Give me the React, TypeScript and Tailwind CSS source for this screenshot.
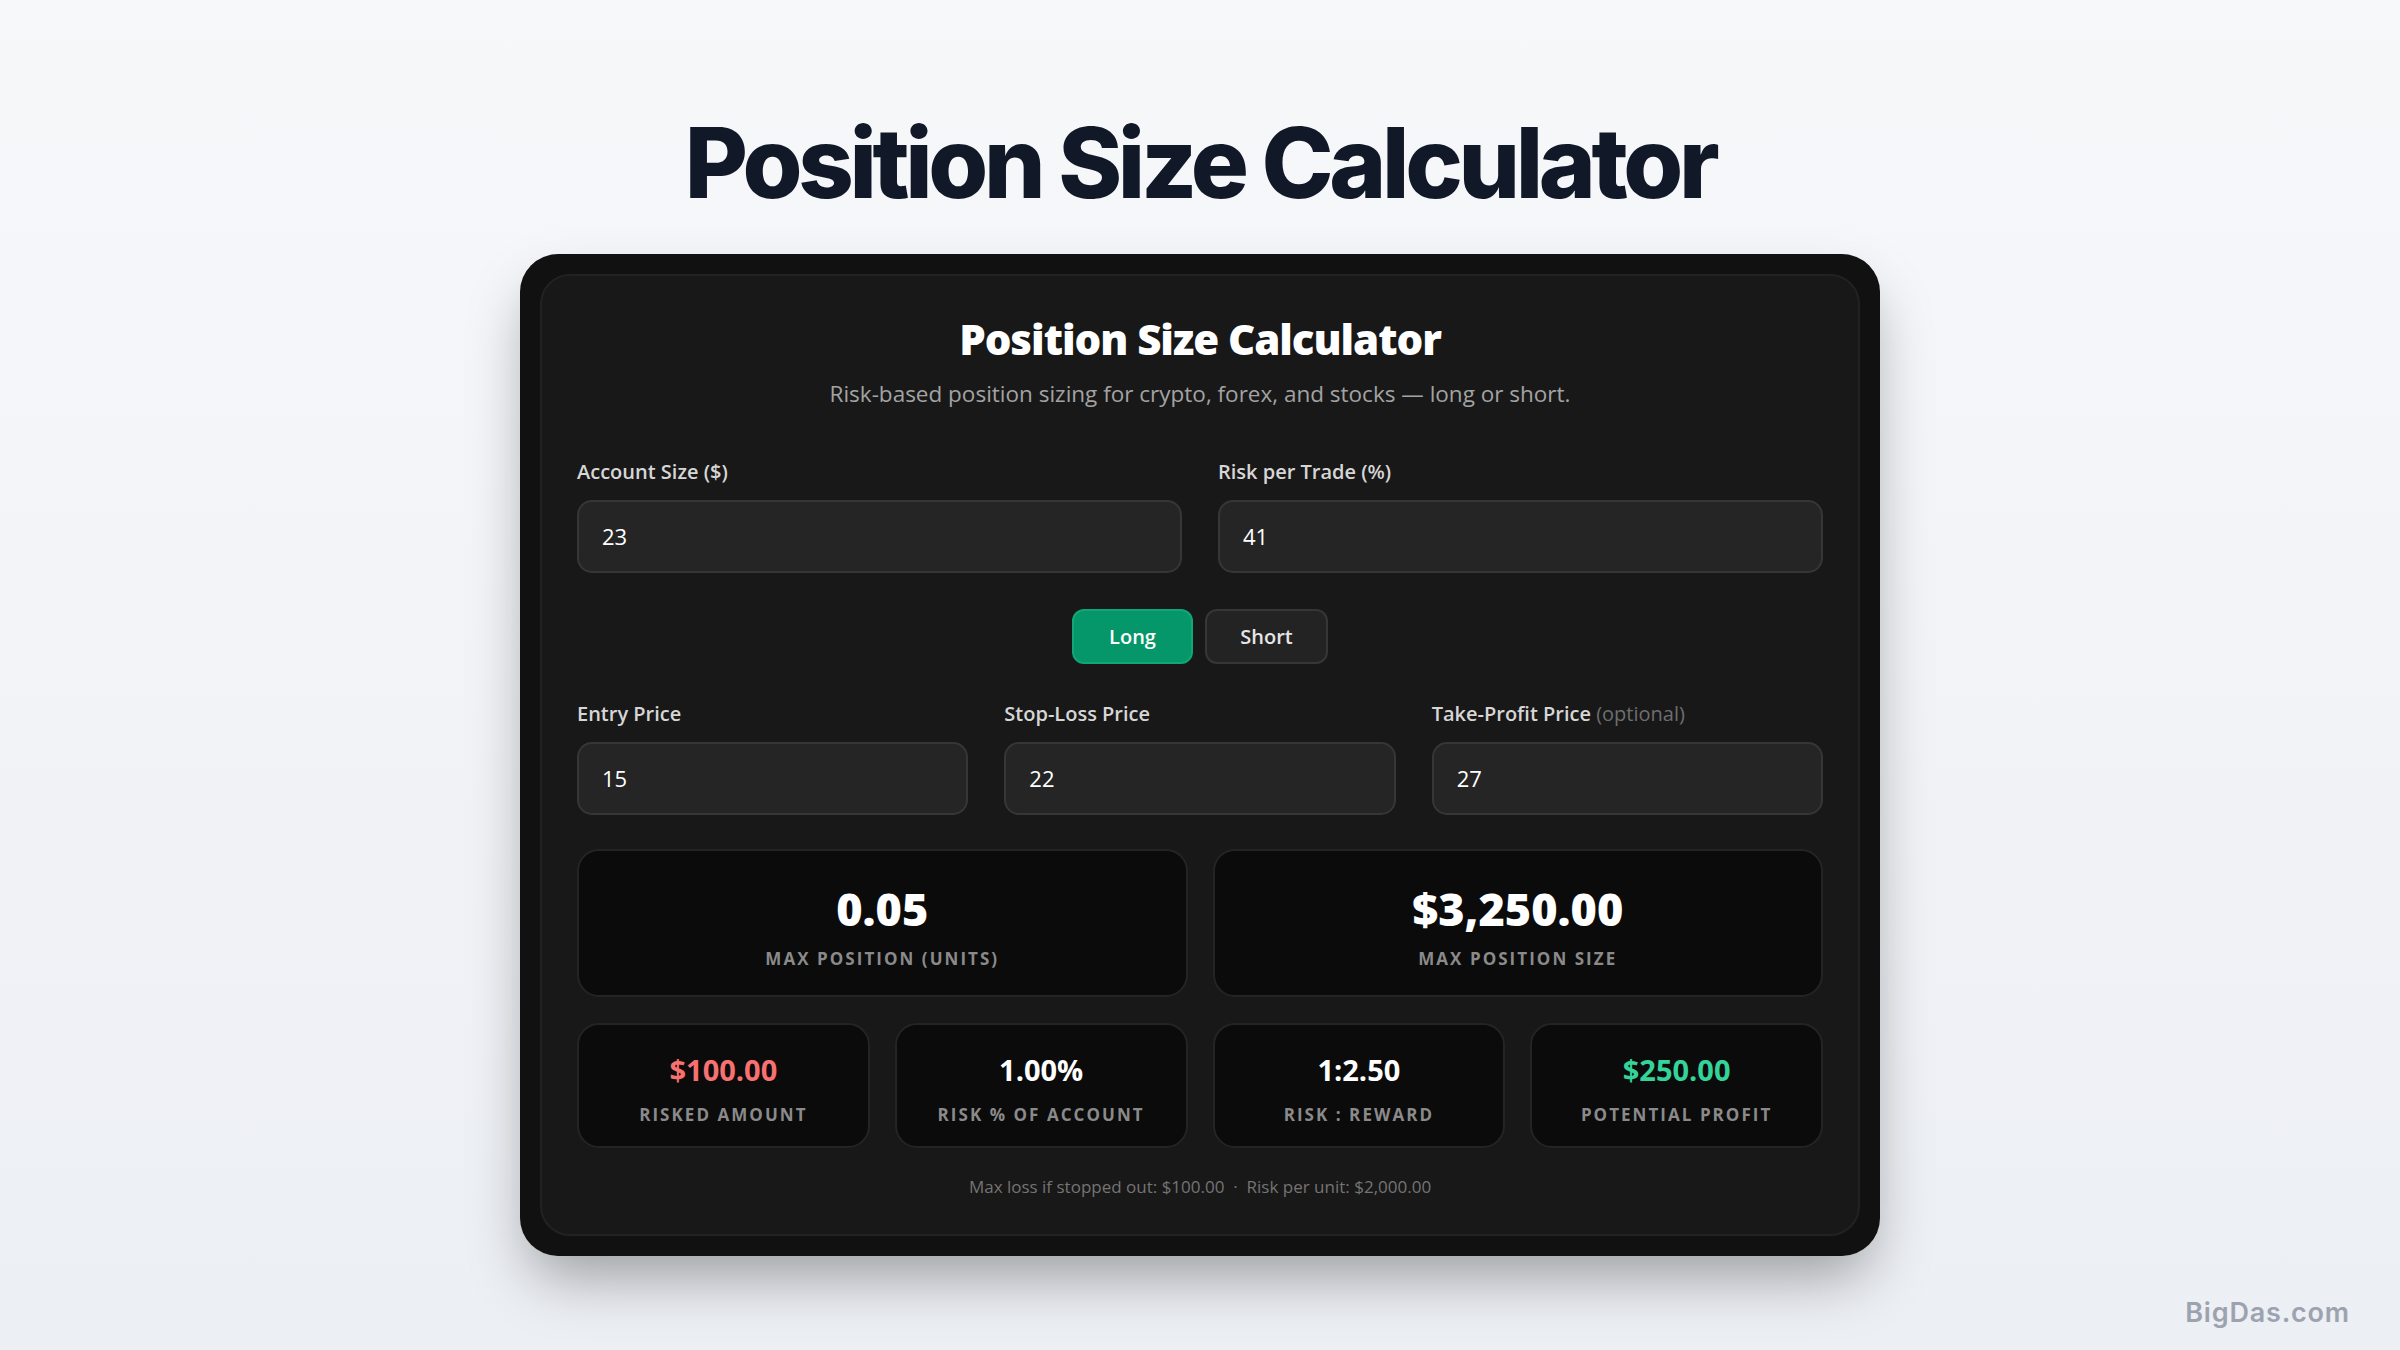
import React from "react";

const body = { fontFamily: '"Open Sans", "Noto Sans", sans-serif' };

function Field({ label, value, optional }: { label: string; value: string; optional?: boolean }) {
  return (
    <div className="flex flex-col">
      <div className="text-[20px] leading-[26px] font-semibold text-[#d6d6d6]">
        {label}
        {optional && <span className="font-normal text-[#6e6e6e]"> (optional)</span>}
      </div>
      <div className="mt-[15px] h-[73px] rounded-[15px] bg-[#252525] border-2 border-[#363636] flex items-center px-[23px] text-[22px] text-white">
        {value}
      </div>
    </div>
  );
}

function BigCard({ value, label }: { value: string; label: string }) {
  return (
    <div className="h-[148px] rounded-[22px] bg-[#0b0b0b] border-2 border-[#242424] flex flex-col items-center pt-[29px]">
      <div className="text-[45px] leading-[58px] font-extrabold text-white">{value}</div>
      <div className="mt-[9px] text-[17px] leading-[24px] font-bold tracking-[0.12em] text-[#8a8a8a]">{label}</div>
    </div>
  );
}

function SmallCard({ value, label, color }: { value: string; label: string; color: string }) {
  return (
    <div className="h-[125px] rounded-[22px] bg-[#0b0b0b] border-2 border-[#242424] flex flex-col items-center pt-[26px]">
      <div className={`text-[29px] leading-[38px] font-bold ${color}`}>{value}</div>
      <div className="mt-[15px] text-[17px] leading-[22px] font-bold tracking-[0.12em] text-[#8a8a8a]">{label}</div>
    </div>
  );
}

export default function App() {
  return (
    <div className="relative w-full h-[1350px] overflow-hidden bg-gradient-to-b from-[#f7f8fa] to-[#eceff4] flex flex-col items-center">
      <h1
        className="mt-[111px] text-[97px] leading-[104px] font-extrabold tracking-[-0.045em] text-[#111827]"
        style={{ fontFamily: 'Inter, "Noto Sans", sans-serif' }}
      >
        Position Size Calculator
      </h1>

      <div className="mt-[39px] w-[1360px] rounded-[38px] bg-[#111111] p-[20px] shadow-[0_30px_60px_-10px_rgba(0,0,0,0.35)]" style={body}>
        <div className="rounded-[30px] bg-[#181818] border-2 border-[#222222] px-[35px] pt-[40px] pb-[35px]">
          <h2 className="text-center text-[42px] leading-[46px] font-extrabold tracking-[-0.025em] text-white">
            Position Size Calculator
          </h2>
          <p className="mt-[17px] text-center text-[22.5px] leading-[30px] text-[#a3a3a3]">
            Risk-based position sizing for crypto, forex, and stocks — long or short.
          </p>

          <div className="mt-[50px] grid grid-cols-2 gap-x-[36px]">
            <Field label="Account Size ($)" value="23" />
            <Field label="Risk per Trade (%)" value="41" />
          </div>

          <div className="mt-[36px] flex justify-center gap-[12px]">
            <button className="w-[121px] h-[55px] rounded-[12px] bg-[#059669] border-2 border-[#10a676] text-white text-[20px] font-semibold">
              Long
            </button>
            <button className="w-[123px] h-[55px] rounded-[12px] bg-[#232323] border-2 border-[#363636] text-[#e5e5e5] text-[20px] font-semibold">
              Short
            </button>
          </div>

          <div className="mt-[37px] grid grid-cols-3 gap-x-[36px]">
            <Field label="Entry Price" value="15" />
            <Field label="Stop-Loss Price" value="22" />
            <Field label="Take-Profit Price" value="27" optional />
          </div>

          <div className="mt-[34px] grid grid-cols-2 gap-[25px]">
            <BigCard value="0.05" label="MAX POSITION (UNITS)" />
            <BigCard value="$3,250.00" label="MAX POSITION SIZE" />
          </div>

          <div className="mt-[26px] grid grid-cols-4 gap-[25px]">
            <SmallCard value="$100.00" label="RISKED AMOUNT" color="text-[#f87171]" />
            <SmallCard value="1.00%" label="RISK % OF ACCOUNT" color="text-white" />
            <SmallCard value="1:2.50" label="RISK : REWARD" color="text-white" />
            <SmallCard value="$250.00" label="POTENTIAL PROFIT" color="text-[#34d399]" />
          </div>

          <p className="mt-[27px] text-center text-[17px] leading-[24px] text-[#747474]">
            Max loss if stopped out: $100.00 &nbsp;·&nbsp; Risk per unit: $2,000.00
          </p>
        </div>
      </div>

      <div
        className="absolute right-[50px] bottom-[21px] text-[27px] leading-[32px] font-semibold tracking-[0.03em] text-[#9ca3af]"
        style={{ fontFamily: 'Inter, "Noto Sans", sans-serif' }}
      >
        BigDas.com
      </div>
    </div>
  );
}
